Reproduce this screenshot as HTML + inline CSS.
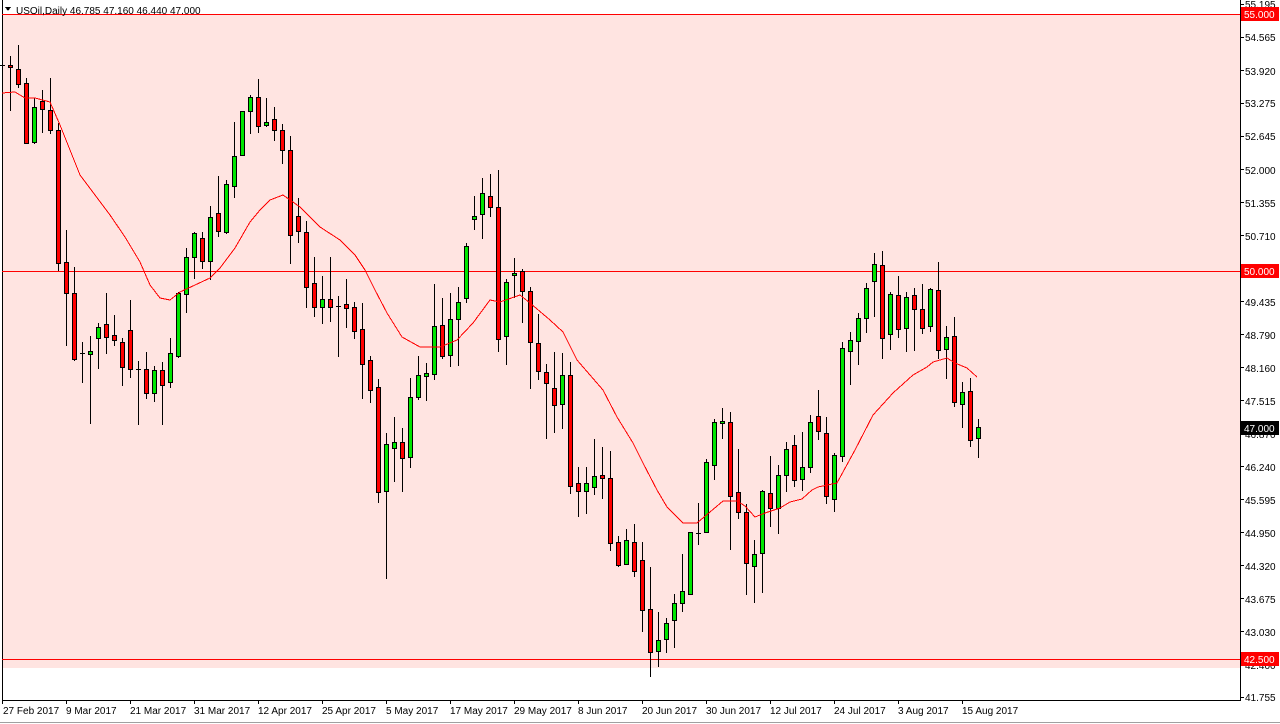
<!DOCTYPE html>
<html><head><meta charset="utf-8"><style>
html,body{margin:0;padding:0;background:#fff;width:1280px;height:724px;overflow:hidden}
svg{display:block}
text{font-family:"Liberation Sans",sans-serif;font-size:10px}
</style></head><body>
<svg id="s" width="1280" height="724" xmlns="http://www.w3.org/2000/svg" shape-rendering="crispEdges">
<rect x="0" y="0" width="1280" height="724" fill="#fff"/>
<rect x="2" y="14" width="1238" height="654" fill="#FFE4E1"/>
<line x1="2.5" y1="0" x2="2.5" y2="700" stroke="#000"/>
<line x1="1240.5" y1="0" x2="1240.5" y2="700" stroke="#000"/>
<line x1="2" y1="700.5" x2="1241" y2="700.5" stroke="#000"/>
<line x1="0" y1="722.5" x2="1280" y2="722.5" stroke="#a0a0a0"/>
<line x1="2" y1="14.5" x2="1240" y2="14.5" stroke="#f00"/>
<line x1="2" y1="271.5" x2="1240" y2="271.5" stroke="#f00"/>
<line x1="2" y1="659.5" x2="1240" y2="659.5" stroke="#f00"/>
<g id="c"></g>
<polyline id="ma" fill="none" stroke="#f00" stroke-width="1" points=""/>
<polygon points="5,7 11,7 8,11" fill="#000"/>
<text x="16" y="14" fill="#000">USOil,Daily  46.785 47.160 46.440 47.000</text>
<g fill="#000">
<text x="1245" y="8">55.195</text>
<text x="1245" y="41">54.565</text>
<text x="1245" y="75">53.920</text>
<text x="1245" y="107">53.275</text>
<text x="1245" y="140">52.645</text>
<text x="1245" y="174">52.000</text>
<text x="1245" y="207">51.355</text>
<text x="1245" y="240">50.710</text>
<text x="1245" y="306">49.435</text>
<text x="1245" y="339">48.790</text>
<text x="1245" y="372">48.160</text>
<text x="1245" y="405">47.515</text>
<text x="1245" y="438">46.870</text>
<text x="1245" y="471">46.240</text>
<text x="1245" y="504">45.595</text>
<text x="1245" y="537">44.950</text>
<text x="1245" y="570">44.320</text>
<text x="1245" y="603">43.675</text>
<text x="1245" y="636">43.030</text>
<text x="1245" y="669">42.400</text>
<text x="1245" y="701">41.755</text>
</g>
<g stroke="#000" id="pt"></g>
<rect x="1241" y="7" width="38" height="14" fill="#f00"/>
<text x="1244" y="18" fill="#fff">55.000</text>
<rect x="1241" y="264" width="38" height="14" fill="#f00"/>
<text x="1244" y="275" fill="#fff">50.000</text>
<rect x="1241" y="652" width="38" height="14" fill="#f00"/>
<text x="1244" y="663" fill="#fff">42.500</text>
<rect x="1241" y="421" width="38" height="14" fill="#000"/>
<text x="1244" y="432" fill="#fff">47.000</text>
<g fill="#000">
<text x="3" y="714">27 Feb 2017</text>
<text x="66" y="714">9 Mar 2017</text>
<text x="130" y="714">21 Mar 2017</text>
<text x="194" y="714">31 Mar 2017</text>
<text x="258" y="714">12 Apr 2017</text>
<text x="322" y="714">25 Apr 2017</text>
<text x="386" y="714">5 May 2017</text>
<text x="450" y="714">17 May 2017</text>
<text x="514" y="714">29 May 2017</text>
<text x="578" y="714">8 Jun 2017</text>
<text x="642" y="714">20 Jun 2017</text>
<text x="706" y="714">30 Jun 2017</text>
<text x="770" y="714">12 Jul 2017</text>
<text x="834" y="714">24 Jul 2017</text>
<text x="898" y="714">3 Aug 2017</text>
<text x="962" y="714">15 Aug 2017</text>
</g>
<g stroke="#000" id="tt"></g>
</svg>
<script>
var C=[
[37,65,65,70],[56,65,67,110],[45,69,84,87],[78,83,143,143],[98,142,107,143],[90,101,109,132],[78,110,130,133],[123,130,263,270],[230,262,293,345],[267,293,359,360],
[342,353,353,382],[336,354,351,423],[323,338,327,368],[293,324,337,353],[315,335,340,345],[338,342,367,385],[300,330,369,377],[361,369,369,424],[352,369,393,398],[366,393,370,401],
[362,370,385,424],[338,382,353,387],[292,356,293,357],[248,294,257,312],[232,257,233,278],[232,238,261,268],[206,261,217,279],[176,213,231,236],[180,232,184,233],[122,186,156,197],
[111,155,111,155],[95,111,97,133],[79,97,126,132],[98,125,122,126],[107,119,130,140],[124,130,150,163],[136,150,235,263],[198,216,231,242],[221,232,287,307],[257,283,307,316],
[276,307,299,323],[257,299,307,321],[296,306,306,356],[279,304,308,327],[302,307,331,338],[303,329,364,398],[356,360,390,402],[379,387,492,502],[433,491,444,578],[417,448,442,481],
[428,442,458,491],[378,457,397,467],[356,397,375,399],[363,376,373,400],[284,374,326,379],[298,325,356,358],[293,355,319,366],[287,319,302,365],[243,298,246,302],[196,219,216,229],
[178,214,193,238],[174,196,207,216],[170,207,339,351],[279,336,282,364],[258,275,273,297],[269,271,291,322],[287,291,342,388],[314,343,371,379],[364,372,383,438],[352,388,405,432],
[353,404,375,428],[362,375,486,493],[467,483,491,516],[467,491,483,513],[439,487,476,494],[447,475,478,498],[451,478,543,550],[536,542,565,566],[529,564,540,564],[524,542,571,576],
[542,560,610,631],[567,609,652,676],[612,651,640,666],[618,639,623,652],[594,620,603,647],[554,603,591,611],[532,594,532,594],[503,533,533,544],[459,532,462,532],[419,465,422,479],
[408,423,421,438],[412,422,496,549],[449,492,512,518],[504,512,563,594],[540,566,554,602],[490,553,491,592],[456,493,508,526],[465,508,475,533],[442,475,449,491],[435,445,480,486],
[432,479,467,490],[415,467,422,472],[390,416,431,439],[417,433,496,503],[453,499,455,511],[342,456,348,461],[332,351,340,384],[313,341,318,364],[283,318,288,332],[253,281,264,316],
[251,265,338,358],[292,334,294,349],[276,295,329,337],[292,328,297,351],[288,295,309,350],[284,309,328,333],[288,326,289,331],[262,290,350,358],[326,349,337,378],[317,336,402,406],
[382,404,392,427],[378,391,440,446],[419,438,427,457]];
var s='';
C.forEach(function(c,k){
 var x=2+8*k,h=c[0],o=c[1],cl=c[2],l=c[3];
 s+='<line x1="'+(x+0.5)+'" y1="'+h+'" x2="'+(x+0.5)+'" y2="'+(l+1)+'" stroke="#000"/>';
 var t=Math.min(o,cl),b=Math.max(o,cl);
 if(b-t<1){s+='<line x1="'+(x-2)+'" y1="'+(t+0.5)+'" x2="'+(x+3)+'" y2="'+(t+0.5)+'" stroke="#000"/>';}
 else s+='<rect x="'+(x-1.5)+'" y="'+(t+0.5)+'" width="4" height="'+(b-t)+'" fill="'+(cl<o?'#00E600':'#F00')+'" stroke="#000"/>';
});
document.getElementById('c').innerHTML=s;
document.getElementById('ma').setAttribute('points','2,93 15,92 25,98 35,98 50,102 60,125 70,150 80,175 95,195 110,215 125,237 140,262 150,285 160,298 170,300 180,292 195,285 210,278 220,268 235,248 250,222 260,210 270,200 283,195 300,207 320,227 340,240 355,255 365,270 375,290 387,313 402,337 420,347 440,347 457,340 473,323 490,300 500,302 520,295 530,303 550,320 563,332 577,360 603,390 617,417 633,443 643,463 657,490 667,507 683,523 697,523 723,501 737,501 745,506 755,517 765,513 780,508 790,502 802,499 812,490 818,487 837,483 855,450 873,415 893,393 913,375 927,367 933,362 947,358 955,363 967,368 977,377');
var p='';for(var i=0;i<22;i++){var y=4+33*i;p+='<line x1="1240" y1="'+(y+0.5)+'" x2="1244" y2="'+(y+0.5)+'"/>';}
document.getElementById('pt').innerHTML=p;
var t='';for(var i=0;i<16;i++){var x=2+64*i;t+='<line x1="'+(x+0.5)+'" y1="700" x2="'+(x+0.5)+'" y2="704"/>';}
document.getElementById('tt').innerHTML=t;
</script>
</body></html>
